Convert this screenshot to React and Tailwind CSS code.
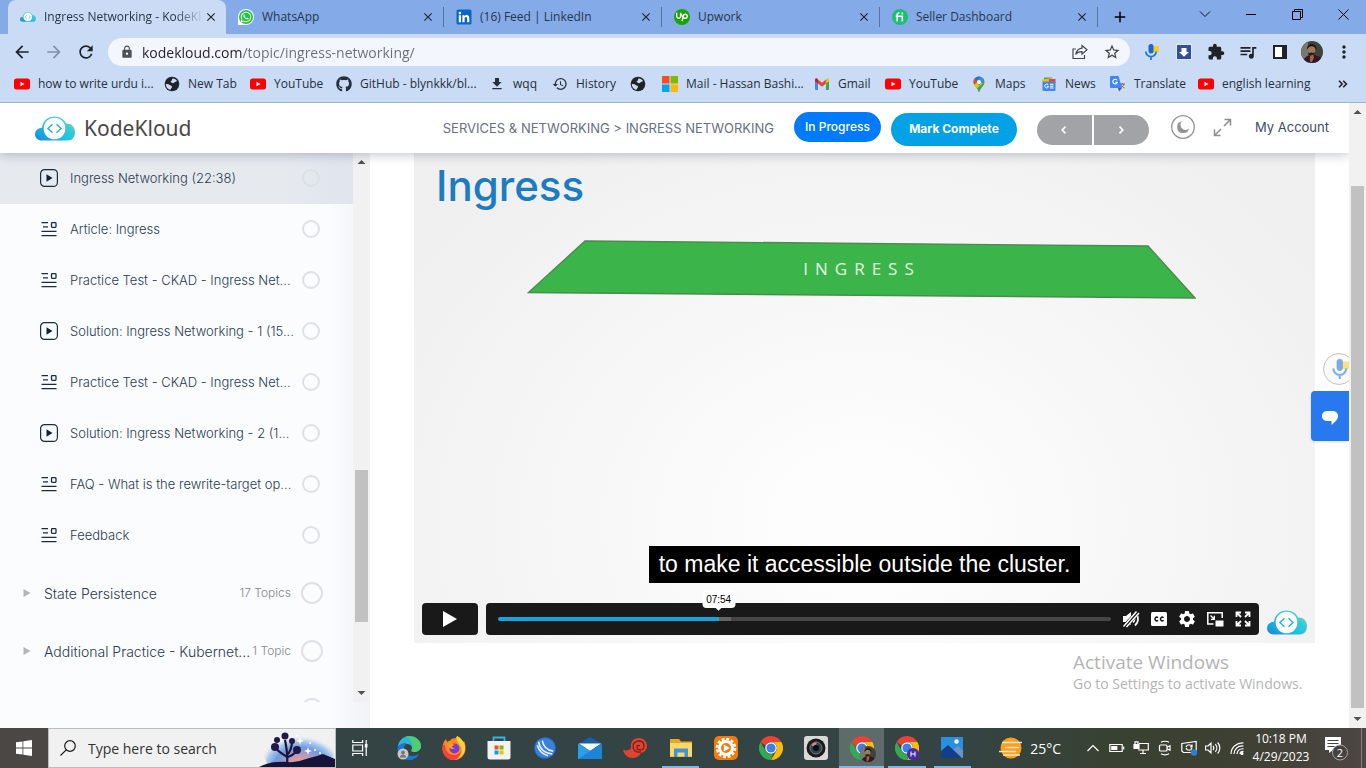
import React from "react";
import { FaWhatsapp, FaGithub } from "react-icons/fa";
import { SiUpwork } from "react-icons/si";
import {
  MdExtension,
  MdHistory,
  MdQueueMusic,
  MdLock,
  MdStarBorder,
  MdMoreVert,
  MdFileDownload,
  MdRefresh,
  MdArrowBack,
  MdArrowForward,
  MdClose,
  MdAdd,
  MdSettings,
} from "react-icons/md";

/* ---------- drawings ---------- */

function Cloud({ id, className }) {
  return (
    <svg viewBox="0 0 40 25" className={className} aria-hidden="true">
      <defs>
        <linearGradient id={id} x1="0" y1="1" x2="1" y2="0.2">
          <stop offset="0" stopColor="#1b86d8" />
          <stop offset="0.45" stopColor="#19bfe6" />
          <stop offset="0.75" stopColor="#35cbd6" />
          <stop offset="1" stopColor="#8ed9a8" />
        </linearGradient>
      </defs>
      <path
        d="M7 24.5C2.8 24.5 0 21.500 0 18.200C0 14.600 3 11.800 7 11.700C8 5 13 .5 19.500 .5C25.500 .5 29.500 3.500 31 7.500C36 7 40 10.500 40 16C40 21 37 24.500 32.500 24.500Z"
        fill={`url(#${id})`}
      />
      <circle cx="19.500" cy="12.500" r="10.800" fill="#fff" />
      <path
        d="M17.500 8.300L13 12.500l4.500 4.200M21.500 8.300L26 12.500l-4.500 4.200"
        fill="none"
        stroke="#22b4dc"
        strokeWidth="1.500"
      />
    </svg>
  );
}

function Globe() {
  return (
    <svg viewBox="0 0 16 16" className="size-4" aria-hidden="true">
      <circle cx="8" cy="8" r="7.300" fill="#1f2227" />
      <path
        d="M8.500 2.500c1.500-.3 3.500.6 4.600 2.500-.8 0-1.200.8-2 1-.9.200-1.100 1.200-2.100 1.200-1 0-1-.9-2-.9-.700 0-.5-1.100.2-1.300.9-.3.500-1.200 1.300-2.500zM1.800 8c1.500-.3 3 .1 4 1 .9.800 2.200.5 2.200 1.700 0 1-1 1.300-1.200 2.300-.1.700-.5.900-1 .8C3.200 12.800 1.700 10.500 1.800 8z"
        fill="#cadbf5"
      />
    </svg>
  );
}

function YouTube() {
  return (
    <svg viewBox="0 0 16 16" className="size-4" aria-hidden="true">
      <rect y="2.500" width="16" height="11" rx="2.500" fill="#f00" />
      <path d="M6.500 5.700v4.600L10.500 8z" fill="#fff" />
    </svg>
  );
}

function Microsoft() {
  return (
    <svg viewBox="0 0 16 16" className="size-4" aria-hidden="true">
      <path fill="#f25022" d="M0 0h7.500v7.500H0z" />
      <path fill="#7fba00" d="M8.500 0H16v7.500H8.500z" />
      <path fill="#00a4ef" d="M0 8.500h7.500V16H0z" />
      <path fill="#ffb900" d="M8.500 8.500H16V16H8.500z" />
    </svg>
  );
}

function Gmail() {
  return (
    <svg viewBox="0 0 16 16" className="size-4" aria-hidden="true">
      <path fill="#4285f4" d="M1 4v9a1 1 0 001 1h2V6z" />
      <path fill="#34a853" d="M12 6v8h2a1 1 0 001-1V4z" />
      <path fill="#ea4335" d="M4 3.500l4 3.200 4-3.200v4L8 10.700 4 7.500z" />
      <path fill="#c5221f" d="M1 4c0-1.800 1.600-2.200 3-.8v4.300L1 5.200z" />
      <path fill="#fbbc04" d="M15 4c0-1.800-1.600-2.200-3-.8v4.300l3-2.300z" />
    </svg>
  );
}

function MapsPin() {
  return (
    <svg viewBox="0 0 16 16" className="size-4" aria-hidden="true">
      <path fill="#34a853" d="M2.500 6a5.500 5.500 0 0111 0c0 4-4.200 5.600-5 10h-1C7 11.600 2.500 10 2.500 6z" />
      <path fill="#fbbc04" d="M3.300 8.800L9.800 3l1.800 4.500-5.400 4.800C5 11 4 10.200 3.300 8.800z" />
      <path fill="#4285f4" d="M9.500.7a5.500 5.500 0 013.600 3.400L8 9.500 6 6z" />
      <path fill="#1a73e8" d="M3.700 2.500A5.500 5.500 0 019.500.7L5.500 5z" />
      <path fill="#ea4335" d="M3.700 2.500L7 5.500 3 8C2 5.800 2.500 3.900 3.700 2.500z" />
      <circle cx="8" cy="6" r="2" fill="#fff" />
    </svg>
  );
}

function News() {
  return (
    <svg viewBox="0 0 16 16" className="size-4" aria-hidden="true">
      <path fill="#34a853" d="M3 1.500h8v4H3z" />
      <path fill="#fbbc04" d="M1 3.500l10-1.500 1 4H1z" />
      <path fill="#ea4335" d="M8 3h6.500v4H8z" />
      <rect x="1.500" y="5.500" width="13" height="9.500" rx="1" fill="#4285f4" />
      <path
        d="M7.300 8.700a2 2 0 100 2.600v-1H6M9 8.300h3.500M9 10.200h3.500M9 12h3.500"
        stroke="#fff"
        strokeWidth="1"
        fill="none"
      />
    </svg>
  );
}

function Translate() {
  return (
    <svg viewBox="0 0 16 16" className="size-4" aria-hidden="true">
      <rect x="6" y="4" width="10" height="11.500" rx="1" fill="#dadce0" />
      <path d="M10 8h5M12.500 7v1M11 8c.5 2 2 3.500 3.500 4M14 8c-.5 2-2 3.500-3.500 4" stroke="#5f6368" strokeWidth=".9" fill="none" />
      <path fill="#4285f4" d="M1 0h7.500L12 12H1a1 1 0 01-1-1V1a1 1 0 011-1z" />
      <path fill="#2b5fc1" d="M8 12h4l-3 3.500z" />
      <path d="M7 4.300A2.300 2.300 0 107.300 6.300H5.200" stroke="#fff" strokeWidth="1.100" fill="none" />
    </svg>
  );
}

function LinkedIn() {
  return (
    <svg viewBox="0 0 16 16" className="size-4" aria-hidden="true">
      <rect x=".5" y=".5" width="15" height="15" rx="1.500" fill="#0a66c2" />
      <path
        fill="#fff"
        d="M2.800 6.200H5v7H2.800zM3.900 2.800a1.300 1.300 0 110 2.600 1.300 1.300 0 010-2.600zM6.400 6.200h2.100v1c.4-.7 1.200-1.200 2.200-1.200 2 0 2.600 1.300 2.600 3.200v4h-2.200V9.700c0-.9-.1-1.800-1.200-1.800s-1.300.9-1.300 1.800v3.500H6.400z"
      />
    </svg>
  );
}

function WhatsApp() {
  return (
    <span className="flex size-4 items-center justify-center rounded-full rounded-bl-none bg-white">
      <span className="flex size-[14px] items-center justify-center rounded-full bg-[#25c43f] text-white">
        <FaWhatsapp className="size-3" />
      </span>
    </span>
  );
}

function Upwork() {
  return (
    <span className="flex size-4 items-center justify-center rounded-full bg-[#14a800] text-white">
      <SiUpwork className="size-3" />
    </span>
  );
}

function Fiverr() {
  return (
    <svg viewBox="0 0 16 16" className="size-4" aria-hidden="true">
      <circle cx="8" cy="8" r="8" fill="#1dbf73" />
      <path d="M5.200 12.500V6c0-1.500.8-2 2.200-2M3.700 7.200h6.600v5.300" stroke="#fff" strokeWidth="1.600" fill="none" />
      <circle cx="10.300" cy="4.600" r="1" fill="#fff" />
    </svg>
  );
}

function Mic({ className }) {
  return (
    <svg viewBox="0 0 16 16" className={className} aria-hidden="true">
      <rect x="8" y="2" width="7" height="6" fill="#fbcb1e" />
      <rect x="4.500" y="0" width="5" height="9.500" rx="2.500" fill="#1967d2" />
      <path d="M1.800 7.500a5.200 5.200 0 0010.400 0M7 12.500V16" stroke="#1a73e8" strokeWidth="1.700" fill="none" />
    </svg>
  );
}

function Avatar({ id, className }) {
  return (
    <svg viewBox="0 0 22 22" className={className} aria-hidden="true">
      <clipPath id={id}>
        <circle cx="11" cy="11" r="11" />
      </clipPath>
      <g clipPath={`url(#${id})`}>
        <rect width="22" height="22" fill="#3f4439" />
        <rect width="7" height="22" fill="#77796f" />
        <path d="M2 22c0-5 4-8 9-8s11 2 11 8z" fill="#3a1420" />
        <ellipse cx="10.500" cy="9.500" rx="3.800" ry="5.600" fill="#a3765f" />
        <path d="M6 9C5 1.500 16.500 1 15.500 9c-1-2.500-2-3.800-4.800-3.800S7 6.500 6 9z" fill="#17120f" />
        <path d="M7 11c.6 5.500 6.500 5.500 7.200 0l-1.200 1c-1.600-.7-3.400-.7-4.800 0z" fill="#241a16" />
        <path d="M9 15l3-1.500 1 3-2 4.500H9z" fill="#94684f" />
      </g>
    </svg>
  );
}

function Chrome({ className, children }) {
  return (
    <svg viewBox="0 0 24 24" className={className} aria-hidden="true">
      <path fill="#ea4335" d="M12 0a12 12 0 0110.400 6H12a6 6 0 00-5.500 3.800L1.600 6A12 12 0 0112 0z" />
      <path fill="#fbbc04" d="M22.400 6A12 12 0 0112 24l5.200-9A6 6 0 0012 6z" />
      <path fill="#34a853" d="M1.600 6l5.200 9a6 6 0 007.400 2.600L12 24A12 12 0 011.600 6z" />
      <circle cx="12" cy="12" r="5.800" fill="#fff" />
      <circle cx="12" cy="12" r="4.600" fill="#3f7ee8" />
      {children}
    </svg>
  );
}

/* ---------- browser frame ---------- */

const tabs = [
  { title: "Ingress Networking - KodeKl", icon: <Cloud id="tabCloud" className="h-[10px] w-4" />, active: true },
  { title: "WhatsApp", icon: <WhatsApp /> },
  { title: "(16) Feed | LinkedIn", icon: <LinkedIn /> },
  { title: "Upwork", icon: <Upwork /> },
  { title: "Seller Dashboard", icon: <Fiverr /> },
];

function TabStrip() {
  return (
    <div className="flex h-[34px] bg-[#84abe8] pl-2">
      <div className="grid min-w-0 flex-1 grid-cols-5" role="tablist">
        {tabs.map((t) => (
          <div
            key={t.title}
            className={
              t.active
                ? "flex min-w-0 items-center rounded-t-lg bg-[#cadbf5] pr-2 pl-3"
                : "flex min-w-0 items-center pl-3"
            }
          >
            <button role="tab" aria-selected={!!t.active} className="flex min-w-0 flex-1 items-center gap-2">
              <span className="flex size-4 shrink-0 items-center">{t.icon}</span>
              <span
                className={
                  t.active
                    ? "min-w-0 flex-1 overflow-hidden bg-[linear-gradient(90deg,#24303f_82%,transparent)] bg-clip-text text-left whitespace-nowrap text-transparent"
                    : "min-w-0 flex-1 overflow-hidden text-left whitespace-nowrap text-[#24364f]"
                }
              >
                {t.title}
              </span>
            </button>
            <button aria-label={`Close ${t.title}`} className={t.active ? "text-[#1d2733]" : "mr-2 text-[#1d2733]"}>
              <MdClose className="size-[14px]" />
            </button>
            {!t.active && <span className="h-5 w-px bg-[#56729f]" />}
          </div>
        ))}
      </div>
      <button aria-label="New tab" className="flex w-11 items-center justify-center">
        <MdAdd className="size-[18px]" />
      </button>
      <div className="ml-10 flex pb-[6px]">
        <button aria-label="Search tabs" className="flex w-[46px] items-center justify-center">
          <svg viewBox="0 0 12 12" className="size-3" fill="none" stroke="#111">
            <path d="M1 3.500l5 5 5-5" />
          </svg>
        </button>
        <button aria-label="Minimize" className="flex w-[46px] items-center justify-center">
          <span className="h-px w-[10px] bg-black" />
        </button>
        <button aria-label="Restore" className="flex w-[46px] items-center justify-center">
          <svg viewBox="0 0 11 11" className="size-[11px]" fill="none" stroke="#000">
            <path d="M.5 2.500h8v8h-8zM2.500 2.500v-2h8v8h-2" />
          </svg>
        </button>
        <button aria-label="Close window" className="flex w-[46px] items-center justify-center">
          <svg viewBox="0 0 11 11" className="size-[11px]" fill="none" stroke="#000">
            <path d="M.5.5l10 10M10.500.5l-10 10" />
          </svg>
        </button>
      </div>
    </div>
  );
}

const toolButton = "flex w-8 items-center justify-center";

function Toolbar() {
  return (
    <div className="flex h-9 items-center pr-[6px] pl-[6px] text-[#1f2227]">
      <button aria-label="Back" className={toolButton}>
        <MdArrowBack className="size-5" />
      </button>
      <button aria-label="Forward" className={toolButton}>
        <MdArrowForward className="size-5 text-[#8191ab]" />
      </button>
      <button aria-label="Reload" className={toolButton}>
        <MdRefresh className="size-5" />
      </button>
      <div className="mr-[6px] ml-[6px] flex h-7 min-w-0 flex-1 items-center rounded-full bg-[#f3f7fd] pr-[2px] pl-3">
        <MdLock className="mr-2 size-[14px] shrink-0 text-[#4d5156]" />
        <input
          aria-label="Address"
          defaultValue="kodekloud.com/topic/ingress-networking/"
          className="min-w-0 flex-1 bg-[linear-gradient(90deg,#202124_100px,#6a6f76_100px)] bg-clip-text text-[14px] text-transparent outline-none"
        />
        <button aria-label="Share" className={toolButton}>
          <svg viewBox="0 0 16 16" className="size-4" fill="none" stroke="#44484d" strokeWidth="1.200">
            <path d="M4 5H1v9.500h11.500V11" />
            <path d="M10 1.500l5 4.300-5 4.300V7.600C7 7.500 5 8.300 3.800 10.500 4.300 7 6.300 4.500 10 4.100z" />
          </svg>
        </button>
        <button aria-label="Bookmark this page" className={toolButton}>
          <MdStarBorder className="size-[18px] text-[#3c4043]" />
        </button>
      </div>
      <button aria-label="Voice typing" className={toolButton}>
        <Mic className="size-4" />
      </button>
      <button aria-label="Downloader" className={toolButton}>
        <svg viewBox="0 0 16 16" className="size-4">
          <rect x=".5" y=".5" width="15" height="15" fill="#344f93" stroke="#dfe8f7" />
          <path d="M5.500 4h5v4H13l-5 4.800L3 8h2.500z" fill="#fff" />
        </svg>
      </button>
      <button aria-label="Extensions" className={toolButton}>
        <MdExtension className="size-[18px]" />
      </button>
      <button aria-label="Media controls" className={toolButton}>
        <MdQueueMusic className="size-5" />
      </button>
      <button aria-label="Side panel" className={toolButton}>
        <svg viewBox="0 0 14 14" className="size-[14px]">
          <path d="M1 1h12v12H1z" fill="#fff" stroke="#1f2227" strokeWidth="2" />
          <path d="M9 1h4v12H9z" fill="#1f2227" />
        </svg>
      </button>
      <button aria-label="Profile" className={toolButton}>
        <Avatar id="profileClip" className="size-[22px]" />
      </button>
      <button aria-label="Menu" className={toolButton}>
        <MdMoreVert className="size-5" />
      </button>
    </div>
  );
}

const bookmarks = [
  { label: "how to write urdu i...", icon: <YouTube />, w: "w-[150px]" },
  { label: "New Tab", icon: <Globe />, w: "w-[86px]" },
  { label: "YouTube", icon: <YouTube />, w: "w-[86px]" },
  { label: "GitHub - blynkkk/bl...", icon: <FaGithub className="size-4" />, w: "w-[153px]" },
  { label: "wqq", icon: <MdFileDownload className="size-[18px]" />, w: "w-[63px]" },
  { label: "History", icon: <MdHistory className="size-4" />, w: "w-[78px]" },
  { label: "", icon: <Globe />, w: "w-8" },
  { label: "Mail - Hassan Bashi...", icon: <Microsoft />, w: "w-[152px]" },
  { label: "Gmail", icon: <Gmail />, w: "w-[71px]" },
  { label: "YouTube", icon: <YouTube />, w: "w-[86px]" },
  { label: "Maps", icon: <MapsPin />, w: "w-[70px]" },
  { label: "News", icon: <News />, w: "w-[69px]" },
  { label: "Translate", icon: <Translate />, w: "w-[88px]" },
  { label: "english learning", icon: <YouTube />, w: "w-[110px]" },
];

function Bookmarks() {
  return (
    <nav aria-label="Bookmarks" className="flex h-8 items-center pb-1 pl-[14px] text-[#26303d]">
      {bookmarks.map((b, i) => (
        <a key={i} href="#bookmark" aria-label={b.label || "Page"} className={`flex shrink-0 items-center gap-2 whitespace-nowrap ${b.w}`}>
          <span className="flex size-4 shrink-0 items-center justify-center">{b.icon}</span>
          {b.label}
        </a>
      ))}
      <button aria-label="More bookmarks" className="mr-[18px] ml-auto">
        <svg viewBox="0 0 10 8" className="h-2 w-[10px]" fill="none" stroke="#1f2227" strokeWidth="1.600">
          <path d="M1 .8L4.200 4 1 7.200M5.200.8L8.400 4 5.200 7.200" />
        </svg>
      </button>
    </nav>
  );
}

/* ---------- page ---------- */

function ScrollBar({ before, thumb, after }) {
  return (
    <div className="flex w-[17px] shrink-0 flex-col bg-[#f1f1f1]" aria-hidden="true">
      <svg viewBox="0 0 17 17" className="size-[17px] shrink-0">
        <path d="M4.500 11h8l-4-4z" fill="#505050" />
      </svg>
      <div className={before} />
      <div className={`mx-[2px] bg-[#c1c1c1] ${thumb}`} />
      <div className={after} />
      <svg viewBox="0 0 17 17" className="size-[17px] shrink-0">
        <path d="M4.500 6h8l-4 4z" fill="#505050" />
      </svg>
    </div>
  );
}

function PageHeader() {
  return (
    <header className="relative z-10 flex h-[50px] items-center bg-white pr-5 pl-[35px] shadow-[0_2px_10px_rgba(20,30,60,0.25)]">
      <a href="#home" className="flex items-center gap-[9px]">
        <Cloud id="headerCloud" className="h-[25px] w-10" />
        <span className="font-['Noto_Sans','Open_Sans',sans-serif] text-[21px] leading-6 text-[#484848]">KodeKloud</span>
      </a>
      <p className="mt-[2px] mr-5 ml-auto text-[13px] whitespace-nowrap text-[#667080]">SERVICES &amp; NETWORKING &gt; INGRESS NETWORKING</p>
      <button className="mr-[10px] mb-[2px] h-[30px] w-[87px] rounded-full bg-[#007bff] text-[12px] font-medium whitespace-nowrap text-white">
        In Progress
      </button>
      <button className="mt-[2px] mr-5 h-[33px] w-[126px] rounded-full bg-[#03a1e6] text-[12px] font-bold whitespace-nowrap text-white">
        Mark Complete
      </button>
      <div className="mt-1 mr-[22px] flex gap-[2px]">
        <button aria-label="Previous" className="flex h-[30px] w-[55px] items-center justify-center rounded-l-full bg-[#a2a3a7]">
          <svg viewBox="0 0 8 8" className="size-2" fill="none" stroke="#fff" strokeWidth="1.600">
            <path d="M5.500.6L2.200 4l3.300 3.400" />
          </svg>
        </button>
        <button aria-label="Next" className="flex h-[30px] w-[55px] items-center justify-center rounded-r-full bg-[#a2a3a7]">
          <svg viewBox="0 0 8 8" className="size-2" fill="none" stroke="#fff" strokeWidth="1.600">
            <path d="M2.500.6L5.800 4 2.500 7.400" />
          </svg>
        </button>
      </div>
      <button aria-label="Dark mode" className="mr-[18px] mb-[2px]">
        <svg viewBox="0 0 24 24" className="size-6">
          <circle cx="12" cy="12" r="11.300" fill="none" stroke="#939393" strokeWidth="1.300" />
          <path d="M11 6.200a6 6 0 107 7.300 4.800 4.800 0 01-7-7.300z" fill="#939393" />
        </svg>
      </button>
      <button aria-label="Full screen" className="mr-[23px] mb-[2px]">
        <svg viewBox="0 0 19 19" className="size-[19px]" fill="none" stroke="#8e8e8e" strokeWidth="1.500">
          <path d="M11.500 1.500H17.500V7.500M17.500 1.500L11 8M1.500 11.500V17.500H7.500M1.500 17.500L8 11" />
        </svg>
      </button>
      <a href="#account" className="text-[13px] whitespace-nowrap text-[#3d4d63]">
        My Account
      </a>
    </header>
  );
}

function VideoIcon() {
  return (
    <svg viewBox="0 0 18 18" className="size-[18px] shrink-0" aria-hidden="true">
      <rect x=".6" y=".6" width="16.800" height="16.800" rx="4" fill="none" stroke="#1c2b42" strokeWidth="1.200" />
      <path d="M6.500 5.300v7.400l6-3.700z" fill="#10213a" />
    </svg>
  );
}

function ArticleIcon() {
  return (
    <svg viewBox="0 0 18 18" className="size-[18px] shrink-0" fill="none" stroke="#1c2b42" strokeWidth="1.300" aria-hidden="true">
      <path d="M1.500 2.600H8M3 6.900H8M1.500 11.300H16.500M1.500 15.600H16.500" />
      <rect x="11.500" y="2.600" width="4.500" height="4.800" rx=".8" />
    </svg>
  );
}

const topics = [
  { title: "Ingress Networking (22:38)", video: true, active: true },
  { title: "Article: Ingress" },
  { title: "Practice Test - CKAD - Ingress Net..." },
  { title: "Solution: Ingress Networking - 1 (15...", video: true },
  { title: "Practice Test - CKAD - Ingress Net..." },
  { title: "Solution: Ingress Networking - 2 (1...", video: true },
  { title: "FAQ - What is the rewrite-target op..." },
  { title: "Feedback" },
];

const sections = [
  { title: "State Persistence", count: "17 Topics" },
  { title: "Additional Practice - Kubernet...", count: "1 Topic" },
  { title: "", count: "" },
];

function Sidebar() {
  return (
    <aside className="flex w-[370px] shrink-0 flex-col bg-[linear-gradient(90deg,#fafcfe_88%,#f1f3f7)] pb-[26px]">
      <div className="flex min-h-0 flex-1">
        <div className="min-w-0 flex-1 overflow-hidden">
          <ul className="text-[13px] leading-5 font-light text-[#2c3a50]">
            {topics.map((t, i) => (
              <li
                key={i}
                className={
                  t.active
                    ? "flex h-[51px] items-center bg-[linear-gradient(90deg,#e6eaef_80%,#dfe4ee)] pr-[33px] pb-px pl-10"
                    : "flex h-[51px] items-center pr-[33px] pb-px pl-10"
                }
              >
                <a href="#topic" className="flex min-w-0 flex-1 items-center gap-3 whitespace-nowrap">
                  {t.video ? <VideoIcon /> : <ArticleIcon />}
                  {t.title}
                </a>
                <input
                  type="checkbox"
                  aria-label={`Completed: ${t.title}`}
                  className={
                    t.active
                      ? "size-[18px] shrink-0 appearance-none rounded-full border-2 border-[#dcdfe4]"
                      : "size-[18px] shrink-0 appearance-none rounded-full border-2 border-[#dfe1e4]"
                  }
                />
              </li>
            ))}
          </ul>
          <ul className="mt-[3px] text-[14px] font-light text-[#2c3a50]">
            {sections.map((s, i) => (
              <li key={i} className="flex h-[58px] items-center pr-[30px] pl-[23px]">
                <button aria-label={s.title || "Next section"} className="flex min-w-0 flex-1 items-center gap-[13px] whitespace-nowrap">
                  <svg viewBox="0 0 8 8" className={s.title ? "size-2 shrink-0" : "size-2 shrink-0 opacity-0"} aria-hidden="true">
                    <path d="M.5 0v8L7.500 4z" fill="#b3b5b8" />
                  </svg>
                  {s.title}
                </button>
                <span className="mr-[10px] text-[12px] whitespace-nowrap text-[#85898f]">{s.count}</span>
                <input
                  type="checkbox"
                  aria-label={`Completed: ${s.title || "section"}`}
                  className="size-[22px] shrink-0 appearance-none rounded-full border-2 border-[#dfe1e4]"
                />
              </li>
            ))}
          </ul>
        </div>
        <ScrollBar before="flex-[300]" thumb="flex-[152]" after="flex-[63]" />
      </div>
    </aside>
  );
}

const playerButton = "flex w-7 items-center justify-center";

function Player() {
  return (
    <section className="relative flex h-[490px] flex-col bg-[radial-gradient(ellipse_at_50%_75%,#fdfdfd_10%,#f6f6f6_50%,#f0f0f0_85%)]">
      <h1 className="mt-[9px] ml-[22px] text-[42px] leading-[48px] font-medium text-[#1b7dc0]">Ingress</h1>
      <div className="mt-[30px] mr-[119px] ml-[113px] grid">
        <svg viewBox="0 0 669 60" preserveAspectRatio="none" className="col-start-1 row-start-1 h-[60px] w-full" aria-hidden="true">
          <path d="M58 1L621 6l47 52L1.500 52.500z" fill="#3bb54a" stroke="#4b8a50" strokeWidth="1.400" />
        </svg>
        <p className="col-start-1 row-start-1 self-center pb-[2px] pl-[1px] text-center font-['Open_Sans',sans-serif] text-[17px] tracking-[7px] text-[#e3f5e3]">
          INGRESS
        </p>
      </div>
      <p className="mt-auto mb-5 self-center bg-black px-[10px] font-['Liberation_Sans',Arial,sans-serif] text-[23px] leading-[37px] whitespace-nowrap text-white">
        to make it accessible outside the cluster.
      </p>
      <div className="flex h-10 gap-2 px-2 pb-2">
        <button aria-label="Play" className="flex w-14 items-center justify-center rounded bg-[#191919]">
          <svg viewBox="0 0 14 16" className="h-4 w-[14px]">
            <path d="M0 0v16L14 8z" fill="#fff" />
          </svg>
        </button>
        <div className="flex min-w-0 flex-1 items-stretch rounded bg-[#191919] pr-[2px] pl-3">
          <div className="relative mr-[6px] flex min-w-0 flex-1 items-center">
            <input
              type="range"
              aria-label="Position"
              defaultValue="36"
              className="h-1 w-full appearance-none rounded-sm bg-[linear-gradient(90deg,#17a3dd_36%,#656565_36%,#656565_38%,#464646_38%)] [&::-webkit-slider-thumb]:size-0 [&::-webkit-slider-thumb]:appearance-none"
            />
            <div className="absolute bottom-[27px] left-[36%] flex h-[18px] w-[33px] -translate-x-1/2 items-center justify-center rounded bg-white font-['Liberation_Sans',Arial,sans-serif] text-[10px] text-black">
              07:54
              <span className="absolute top-[16px] size-1 rotate-45 bg-white" />
            </div>
          </div>
          <button aria-label="Unmute" className={playerButton}>
            <svg viewBox="0 0 18 18" className="size-[18px]">
              <path d="M1 6h3l5-4v13l-5-3H1z" fill="#fff" />
              <path d="M11.500 6c1.500 2 1.500 4-.3 6.500M13 2.500c4 3.500 4 9.500 0 13" stroke="#fff" strokeWidth="1.700" fill="none" />
              <path d="M2 17.500L16.500 1.500" stroke="#191919" strokeWidth="5" />
              <path d="M1.500 16.500L14.500 1.500M4.500 17L17 3" stroke="#fff" strokeWidth="1.500" />
            </svg>
          </button>
          <button aria-label="Captions" className={playerButton}>
            <svg viewBox="0 0 18 16" className="h-4 w-[18px]">
              <rect x="1" y="1" width="16" height="14" rx="1.500" fill="#fff" />
              <path d="M8 6.700a1.800 1.800 0 100 2.600M13.500 6.700a1.800 1.800 0 100 2.600" stroke="#191919" strokeWidth="1.500" fill="none" />
            </svg>
          </button>
          <button aria-label="Settings" className={playerButton}>
            <MdSettings className="size-5 text-white" />
          </button>
          <button aria-label="Picture in picture" className={playerButton}>
            <svg viewBox="0 0 18 16" className="h-4 w-[18px]">
              <path d="M7.500 13H1.800V1.800H16.200V7" stroke="#fff" strokeWidth="1.500" fill="none" />
              <rect x="9.500" y="9.500" width="8" height="6" fill="#fff" />
              <path d="M4.500 4.500L8 8M8.300 4.800v3.500H4.800" stroke="#fff" strokeWidth="1.300" fill="none" />
            </svg>
          </button>
          <button aria-label="Enter full screen" className={playerButton}>
            <svg viewBox="0 0 16 16" className="size-4" fill="none" stroke="#fff" strokeWidth="1.800">
              <path d="M1.500 6V1.500H6M1.500 1.500l4.500 4.500M10 1.500h4.500V6M14.500 1.500L10 6M1.500 10v4.500H6M1.500 14.500L6 10M10 14.500h4.500V10M14.500 14.500L10 10" />
            </svg>
          </button>
        </div>
        <a href="#kodekloud" aria-label="KodeKloud" className="flex items-end">
          <Cloud id="playerCloud" className="h-[25px] w-10" />
        </a>
      </div>
    </section>
  );
}

function Page() {
  return (
    <div className="flex min-h-0 flex-1 border-t border-[#9fb0cc] bg-white font-[Inter,sans-serif]">
      <div className="relative flex min-w-0 flex-1 flex-col overflow-hidden">
        <PageHeader />
        <div className="flex min-h-0 flex-1">
          <Sidebar />
          <main className="min-w-0 flex-1 pr-[34px] pl-11">
            <Player />
          </main>
        </div>
        <button
          aria-label="Voice typing"
          className="absolute top-[250px] -right-[6px] flex size-8 items-center justify-center rounded-full border border-[#c3c3c3] bg-[#fafafa] pl-1"
        >
          <Mic className="size-5 opacity-55" />
        </button>
        <button
          aria-label="Chat"
          className="absolute top-[288px] right-0 flex h-[50px] w-[38px] items-center justify-center rounded-l bg-[#2878f0] shadow"
        >
          <svg viewBox="0 0 16 14" className="mt-1 h-[14px] w-4">
            <path d="M5.500 0h5C14 0 16 2.200 16 5c0 3.500-3 6-6.500 9v-4h-4C2 10 0 7.800 0 5s2-5 5.500-5z" fill="#fff" />
          </svg>
        </button>
        <div className="absolute right-10 bottom-[34px] w-[236px] font-['Open_Sans',sans-serif] whitespace-nowrap text-[#b4b4b4]">
          <p className="text-[19px] leading-6">Activate Windows</p>
          <p className="text-[14px] leading-5">Go to Settings to activate Windows.</p>
        </div>
      </div>
      <ScrollBar before="flex-[66]" thumb="flex-[522]" after="flex-[3]" />
    </div>
  );
}

/* ---------- taskbar ---------- */

const apps = [
  {
    name: "Edge",
    icon: (
      <svg viewBox="0 0 24 24" className="size-6">
        <path d="M.8 11C1.500 4.500 6.500 0 12.500 0 19 0 24 4.500 24 10c0 3.500-3 6-6.500 6-2.500 0-3.700-1-3-2 1.700-3-.7-6-4.500-6-4 0-7.500 1-9.200 3z" fill="#2fb4d6" />
        <path d="M9 .6C17-1.500 24 4 24 10c0 3.500-3 6-6.500 6-2.500 0-3.700-1-3-2C17 9 15 4 9 .6z" fill="#4fcf6c" />
        <path d="M.5 12c1-3 5.500-6 9.500-4.800C6.500 9 6 14 9 17.500c3 3.500 9 3 13 .5-2 4-6 6-10 6C5 24 0 18.500 .5 12z" fill="#1877d2" />
        <circle cx="6" cy="18" r="5.500" fill="#c9c9c9" />
        <circle cx="6" cy="16.500" r="1.900" fill="#777" />
        <path d="M2.700 21.500c.5-4 6-4 6.600 0z" fill="#777" />
      </svg>
    ),
  },
  {
    name: "Firefox",
    icon: (
      <svg viewBox="0 0 24 24" className="size-6">
        <path d="M12 24A11.500 11.500 0 01.5 12.500C.5 8 2 5 4 3l1 3c1-1 2-1.300 3-1.300C9.500 2.500 12 2 13 2.500c1-.5 1.500-1.500 2-2.500 4 2 5 4 6 6l1-1c1.500 3 1.500 5 1.500 7.500A11.500 11.500 0 0112 24z" fill="#ff8a1f" />
        <path d="M15 0c4 2 7 6 8 10 1 8-5 13-9 13 5-3 7-7 5-12-1-3-6-6-4-11z" fill="#ffd43a" />
        <path d="M.5 12.500C.5 9 2 8 3 9c0 6 4 10 9 10 4 0 6-2 7-4-1 6-4 9-7.500 9C5 24 .5 19 .5 12.500z" fill="#f5403f" />
        <circle cx="12.500" cy="12.500" r="5" fill="#7a3ad6" />
        <path d="M5 8c3-2 6 0 8 1-2 0-3 1-3 2 1 1 2 1 3 1-2 2-6 1-8-4z" fill="#ff9a24" />
      </svg>
    ),
  },
  {
    name: "Microsoft Store",
    icon: (
      <svg viewBox="0 0 24 24" className="size-6">
        <path d="M6.500 6V1.500h11V6" stroke="#35b5e5" strokeWidth="1.800" fill="none" />
        <path d="M.5 5h23v16a2.500 2.500 0 01-2.500 2.500H3A2.500 2.500 0 01.5 21z" fill="#f2f2f2" />
        <path d="M7.500 9.500h4v4h-4z" fill="#f25022" />
        <path d="M12.500 9.500h4v4h-4z" fill="#7fba00" />
        <path d="M7.500 14.500h4v4h-4z" fill="#00a4ef" />
        <path d="M12.500 14.500h4v4h-4z" fill="#ffb900" />
      </svg>
    ),
  },
  {
    name: "Remote",
    icon: (
      <svg viewBox="0 0 24 24" className="size-[22px]">
        <circle cx="12" cy="12" r="11.500" fill="#3a80dc" stroke="#2561b8" />
        <path d="M5 5c1 7 6 12.500 15 13.500M9 4c1 6 5 10.500 12 11.500M3.500 9c2 6 6 10 12 11.500" stroke="#e5f1ff" strokeWidth="1.700" fill="none" />
      </svg>
    ),
  },
  {
    name: "Mail",
    icon: (
      <svg viewBox="0 0 24 24" className="size-6">
        <path d="M0 8L12 1l12 7v3H0z" fill="#1261ab" />
        <path d="M1 7.500h22L12 15z" fill="#fff" />
        <path d="M0 7.500L12 15v8H0z" fill="#2aa0ea" />
        <path d="M24 7.500L12 15 0 23h24z" fill="#1b86d8" />
      </svg>
    ),
  },
  {
    name: "Nautilus",
    icon: (
      <svg viewBox="0 0 24 24" className="size-6">
        <path d="M0 14c4 1 7 0 8-2C7 5 11 2 16 2c5 0 8 4 8 8 0 5-5 7-6 7-2 4-6 5-9 5-5 0-8-4-9-8z" fill="#dd4532" />
        <path d="M18 16c-5 1-8-2-8-6 0-3 3-5 6-5s5 2 5 5-2 4-4 4-3-1-3-3 2-2 3-1" stroke="#7c1f17" strokeWidth="1.300" fill="none" />
      </svg>
    ),
  },
  {
    name: "File Explorer",
    running: "mx-1 bg-[#76b9ed]",
    icon: (
      <svg viewBox="0 0 24 24" className="size-6">
        <path d="M1 3h9l2 2.500h11V21H1z" fill="#e8a91c" />
        <path d="M1 7h22v13.500H1z" fill="#fbd867" />
        <path d="M5 21v-8.500h14V21h-3.500v-4.500h-7V21z" fill="#3f95d9" />
      </svg>
    ),
  },
  {
    name: "Media player",
    icon: (
      <svg viewBox="0 0 24 24" className="size-6">
        <rect width="24" height="24" rx="5" fill="#f47a0c" />
        <circle cx="12" cy="12" r="9" fill="none" stroke="#fff" strokeWidth="2.600" strokeDasharray="2.900 1.812" />
        <circle cx="12" cy="12" r="6.500" fill="none" stroke="#fff" strokeWidth="3" />
        <path d="M9.800 8.500v7l6-3.500z" fill="#fff" />
      </svg>
    ),
  },
  { name: "Chrome", icon: <Chrome className="size-6" /> },
  {
    name: "Camera",
    icon: (
      <svg viewBox="0 0 24 24" className="size-6">
        <rect width="24" height="24" rx="3" fill="#d9d9d9" />
        <circle cx="12" cy="12" r="9.500" fill="#1b1b1b" />
        <circle cx="12" cy="12" r="6" fill="#284552" stroke="#777" />
        <circle cx="12" cy="12" r="3" fill="#0b0f14" />
        <path d="M8.500 10a4 4 0 014-2.500" stroke="#f08a80" strokeWidth="1.800" fill="none" />
      </svg>
    ),
  },
  {
    name: "Chrome profile",
    running: "bg-[#76b9ed]",
    active: true,
    icon: (
      <span className="relative">
        <Chrome className="size-6" />
        <Avatar id="taskClip" className="absolute -right-[2px] -bottom-[2px] size-4" />
      </span>
    ),
  },
  {
    name: "Chrome H",
    running: "mx-1 bg-[#76b9ed]",
    icon: (
      <Chrome className="size-6">
        <circle cx="18" cy="18" r="6" fill="#4a2aa5" />
        <path d="M16 15.500v5M20 15.500v5M16 18h4" stroke="#fff" strokeWidth="1" />
      </Chrome>
    ),
  },
  {
    name: "Photos",
    running: "mx-1 bg-[#76b9ed]",
    icon: (
      <svg viewBox="0 0 24 24" className="size-6">
        <rect x="1" y="1" width="22" height="21" fill="#2a8fe0" />
        <path d="M13 14l5-4 5 5v7H13z" fill="#6b93c9" />
        <path d="M1 15l7-6 14 13H1z" fill="#123f86" />
        <circle cx="16.500" cy="5.500" r="2.200" fill="#fff" />
      </svg>
    ),
  },
];

const tray = [
  ["Show hidden icons", <path d="M2.500 11L8 5.500 13.500 11" />],
  ["Battery", <><path d="M.8 4.500h12.400v7H.8zM14.700 6.500v3" /><path d="M2.800 6.500h5v3h-5z" fill="#fff" /></>],
  ["Network lock", <><path d="M6 3.500h9.300v6.500H5M10 10v3.500M7 13.500h6" /><path d="M1 4.500h5v4H1z" fill="#fff" /><path d="M2 4V1.800h3V4" /></>],
  ["Meet now", <><rect x="2.500" y="5" width="7.500" height="6" rx="1" /><path d="M10 7.200l3-1.500v4.600l-3-1.500M4 2.200c2-1.300 6-1.300 8 0M4 13.800c2 1.300 6 1.300 8 0" /></>],
  ["Sync", <><path d="M.8 3.500l14.400-2v11H2.500L.8 11zM5 7c1-3 5-3 6 0M11 8c-1 3-5 3-6 0M11 4.500V7H9" /><circle cx="13" cy="12.500" r="3.300" fill="#2f7fd0" stroke="none" /></>],
  ["Volume", <><path d="M.5 6h2.500l3-2.800v9.600L3 10H.5zM8 6c1 1.200 1 2.800 0 4M10.300 4.200c2 2.200 2 5.400 0 7.600M12.600 2.500c3 3.200 3 7.800 0 11" /></>],
  ["Wi-Fi", <><path d="M2 14C2 7 8 2.500 14.500 3M5 14c0-5 4-8.500 9.500-8M8 14c0-3 2.500-5.500 6.500-5.200M11 14c0-1.500 1.200-3 3.500-2.600" /><circle cx="13" cy="13.500" r="1" fill="#fff" /></>],
];

function Taskbar() {
  return (
    <footer className="flex h-10 shrink-0 bg-[linear-gradient(90deg,#4a4745_0%,#4a4745_3.500%,#344344_25%,#344344_70%,#394232_82%,#3d4032_90%,#4d4644_100%)] text-white">
      <button aria-label="Start" className="flex w-12 items-center justify-center">
        <svg viewBox="0 0 16 16" className="size-4" fill="#fff">
          <path d="M0 2.300l6.500-.9v6.200H0zM7.300 1.300L16 0v7.600H7.300zM0 8.400h6.500v6.200L0 13.700zM7.300 8.400H16V16l-8.700-1.300z" />
        </svg>
      </button>
      <label className="flex w-72 items-center overflow-hidden border border-[#bdbdbd] bg-[#f1f1f1] pl-[11px]">
        <svg viewBox="0 0 16 16" className="size-4 shrink-0" fill="none" stroke="#1c1c1c" strokeWidth="1.200" aria-label="Search">
          <circle cx="10" cy="6" r="5.300" />
          <path d="M6.200 9.800L.5 15.500" />
        </svg>
        <input
          placeholder="Type here to search"
          className="ml-3 min-w-0 flex-1 bg-transparent text-[14px] text-[#333] outline-none placeholder:text-[#333]"
        />
        <svg viewBox="0 0 76 38" className="h-[38px] w-[76px] shrink-0" aria-hidden="true">
          <defs>
            <radialGradient id="glow" cx=".52" cy=".75" r=".6">
              <stop offset="0" stopColor="#f2a169" />
              <stop offset=".3" stopColor="#c99ab4" />
              <stop offset=".6" stopColor="#6d9be0" />
              <stop offset=".8" stopColor="#a9c8ee" />
              <stop offset="1" stopColor="#f1f1f1" stopOpacity="0" />
            </radialGradient>
          </defs>
          <ellipse cx="40" cy="24" rx="35" ry="25" fill="url(#glow)" />
          <path d="M0 38c8-4 16-6 28-5 10 1 18-3 30-6l6-2 12 5v8z" fill="#17143a" />
          <path d="M28 35c1-8 0-14-2-24M28 28c-4-3-9-5-12-10M28 26c3-3 5-8 5-14M29 28c3-1 6-3 9-6" stroke="#191538" strokeWidth="2.200" fill="none" />
          <g fill="#201b46">
            <circle cx="26" cy="7" r="3.500" />
            <circle cx="18" cy="11" r="3" />
            <circle cx="16" cy="18" r="4" />
            <circle cx="33" cy="12" r="3" />
            <circle cx="38" cy="21" r="4" />
          </g>
          <path d="M41 8l1 3 3 1-3 1-1 3-1-3-3-1 3-1zM49 18l1 3 3 1-3 1-1 3-1-3-3-1 3-1z" fill="#fff" />
          <g fill="#fff">
            <circle cx="51" cy="14" r="1" />
            <circle cx="56" cy="21" r="1" />
            <circle cx="61" cy="24" r="1" />
            <circle cx="38" cy="7" r="1" />
          </g>
        </svg>
      </label>
      <button aria-label="Task view" className="flex w-12 items-center justify-center">
        <svg viewBox="0 0 16 16" className="size-4" fill="none" stroke="#fff" strokeWidth="1.200">
          <path d="M.8 0v2.500h9.800V0M.8 16v-2.500h9.800V16M.8 5h9.800v6H.8zM14.200 0v16" />
          <path d="M12.800 4h2.700v3.500h-2.700z" fill="#fff" stroke="none" />
        </svg>
      </button>
      <div className="ml-[2px] flex w-[589px]">
        {apps.map((a) => (
          <button key={a.name} aria-label={a.name} className={a.active ? "flex flex-1 flex-col bg-[#5d6b6b]" : "flex flex-1 flex-col"}>
            <span className="flex flex-1 items-center justify-center self-center">{a.icon}</span>
            {a.running && (
              <span className="-mt-[2px] flex flex-col self-stretch">
                <span className={`h-[2px] ${a.running}`} />
              </span>
            )}
          </button>
        ))}
      </div>
      <div className="ml-auto flex items-center">
        <button className="mr-5 flex items-center gap-[7px] text-[14px]">
          <svg viewBox="0 0 24 22" className="h-[22px] w-6" aria-hidden="true">
            <circle cx="12" cy="11" r="10.500" fill="#f7a11f" />
            <path d="M3 5.500h20M6 10.500h14M0 14.500h17M4 18h17" stroke="#f5e3c3" strokeWidth="1.700" />
          </svg>
          25°C
        </button>
        {tray.map(([name, shape]) => (
          <button key={name} aria-label={name} className="flex w-6 items-center justify-center">
            <svg viewBox="0 0 16 16" className="size-4" fill="none" stroke="#fff" strokeWidth="1.200">
              {shape}
            </svg>
          </button>
        ))}
        <button className="mr-[2px] ml-[3px] w-[58px] text-center text-[12px] leading-[18px] whitespace-nowrap">
          10:18 PM
          <br />
          4/29/2023
        </button>
        <button aria-label="Notifications" className="mr-[13px] ml-3 flex items-center">
          <svg viewBox="0 0 24 26" className="h-[26px] w-6" aria-hidden="true">
            <path d="M1 2h16v13H9l-4 3v-3H1z" fill="#fff" />
            <path d="M3.500 5.500h11M3.500 8.500h11M3.500 11.500h7" stroke="#474340" strokeWidth="1.200" />
            <circle cx="16" cy="17.500" r="7.500" fill="#44413f" stroke="#a9a6a4" />
            <text x="16" y="21.500" textAnchor="middle" fontSize="11" fill="#fff">
              2
            </text>
          </svg>
        </button>
        <span className="mr-1 h-10 w-px bg-[#85807d]" />
      </div>
    </footer>
  );
}

export default function App() {
  return (
    <div className="flex h-screen min-h-[480px] flex-col overflow-hidden bg-[#cadbf5] font-['Open_Sans','Noto_Sans',sans-serif] text-[12px]">
      <TabStrip />
      <Toolbar />
      <Bookmarks />
      <Page />
      <Taskbar />
    </div>
  );
}
